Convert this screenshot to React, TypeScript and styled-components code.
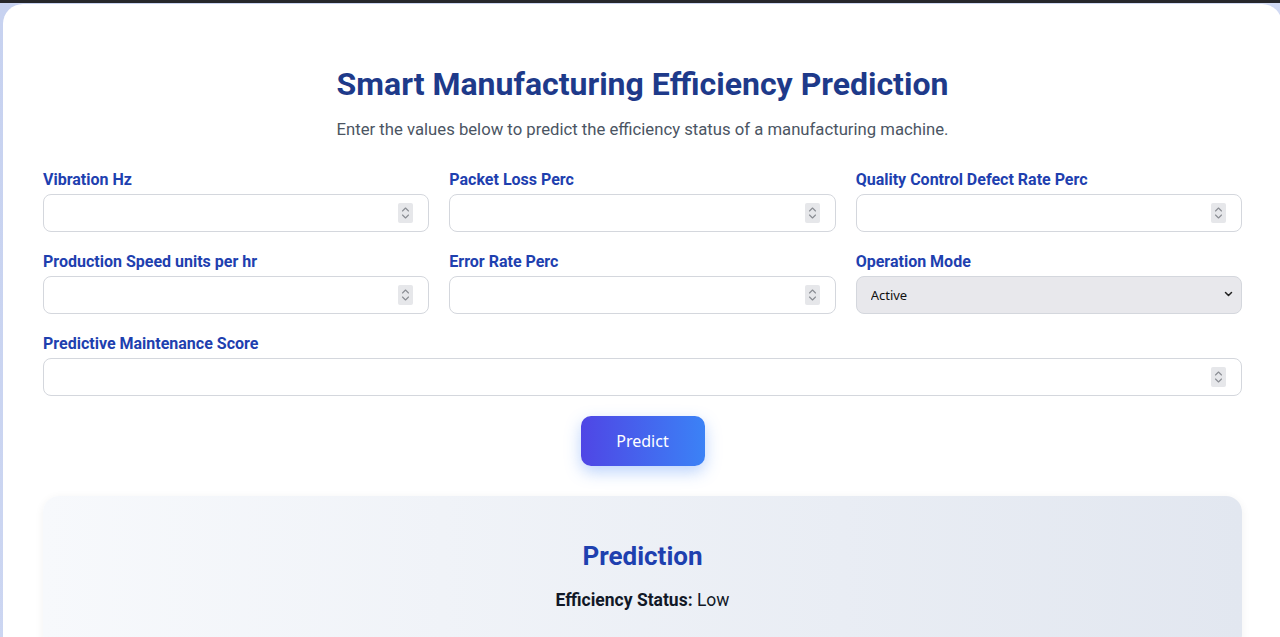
import React from "react";
import styled, { createGlobalStyle } from "styled-components";

const Global = createGlobalStyle`
  html, body { margin: 0; padding: 0; }
  body {
    background: linear-gradient(135deg, #c7d2f0 0%, #d6def5 100%);
    border-top: 3px solid #26272b;
    font-family: Roboto, "Noto Sans", Arial, sans-serif;
    min-height: 634px;
    overflow: hidden;
  }
  * { box-sizing: border-box; }
`;

const Card = styled.main`
  margin: 1px -2px 0 3px;
  background: #ffffff;
  border-radius: 20px 20px 0 0;
  padding: 61px 40px 40px;
  min-height: 640px;
`;

const Title = styled.h1`
  margin: 0;
  text-align: center;
  color: #1e3a8a;
  font-size: 32px;
  font-weight: 700;
  line-height: 38px;
`;

const Subtitle = styled.p`
  margin: 17px 0 0;
  text-align: center;
  color: #4b5563;
  font-size: 16.7px;
  line-height: 20px;
`;

const FormGrid = styled.div`
  margin-top: 31px;
  display: grid;
  grid-template-columns: repeat(3, 1fr);
  column-gap: 20px;
  row-gap: 21px;
`;

const Field = styled.label<{ $span?: number }>`
  display: flex;
  flex-direction: column;
  gap: 5px;
  grid-column: span ${(p) => p.$span ?? 1};
`;

const LabelText = styled.span`
  color: #1e40af;
  font-size: 16px;
  font-weight: 700;
  line-height: 18px;
`;

const InputWrap = styled.div`
  position: relative;
`;

const TextInput = styled.input`
  width: 100%;
  height: 38px;
  border: 1px solid #d4d7dd;
  border-radius: 8px;
  background: #fff;
  padding: 0 12px;
  font: inherit;
  font-size: 14px;
  outline: none;
`;

const Spinner = styled.span`
  position: absolute;
  right: 16px;
  top: 9px;
  width: 15px;
  height: 20px;
  background: #e6e7ea;
  border-radius: 2px;
  display: flex;
  align-items: center;
  justify-content: center;
`;

const Select = styled.select`
  width: 100%;
  height: 38px;
  border: 1px solid #d4d7dd;
  border-radius: 8px;
  background: #e8e8ec;
  padding: 0 14px;
  font-family: "Noto Sans", Roboto, sans-serif;
  font-size: 13px;
  color: #111;
  appearance: none;
  outline: none;
`;

const Chevron = styled.span`
  position: absolute;
  right: 9px;
  top: 14px;
  pointer-events: none;
  display: flex;
`;

const ButtonRow = styled.div`
  display: flex;
  justify-content: center;
  margin-top: 20px;
`;

const PredictButton = styled.button`
  width: 124px;
  height: 50px;
  border: none;
  border-radius: 10px;
  background: linear-gradient(90deg, #4f46e5 0%, #3b82f6 100%);
  color: #fff;
  font-family: "Noto Sans", "Open Sans", sans-serif;
  font-size: 16px;
  box-shadow: 0 6px 16px rgba(59, 130, 246, 0.35);
  cursor: pointer;
`;

const ResultBox = styled.section`
  margin-top: 30px;
  border-radius: 16px;
  background: linear-gradient(90deg, #f7f9fc 0%, #e2e7f0 100%);
  box-shadow: 0 2px 10px rgba(15, 23, 42, 0.06);
  padding: 44px 20px 40px;
  text-align: center;
`;

const ResultTitle = styled.h2`
  margin: 0;
  color: #1e40af;
  font-size: 26px;
  font-weight: 700;
  line-height: 32px;
`;

const ResultText = styled.p`
  margin: 17px 0 0;
  color: #111827;
  font-size: 17.5px;
  line-height: 22px;
  strong { font-weight: 700; }
`;

const SpinIcon = () => (
  <svg width="9" height="14" viewBox="0 0 9 14" fill="none" stroke="#8a8d93" strokeWidth="1.1" strokeLinecap="round" strokeLinejoin="round">
    <path d="M1.5 5 L4.5 2 L7.5 5" />
    <path d="M1.5 9 L4.5 12 L7.5 9" />
  </svg>
);

const NumberField = ({ label, span }: { label: string; span?: number }) => (
  <Field $span={span}>
    <LabelText>{label}</LabelText>
    <InputWrap>
      <TextInput type="text" inputMode="decimal" />
      <Spinner>
        <SpinIcon />
      </Spinner>
    </InputWrap>
  </Field>
);

export default function App() {
  return (
    <>
      <Global />
      <Card>
        <Title>Smart Manufacturing Efficiency Prediction</Title>
        <Subtitle>Enter the values below to predict the efficiency status of a manufacturing machine.</Subtitle>
        <FormGrid>
          <NumberField label="Vibration Hz" />
          <NumberField label="Packet Loss Perc" />
          <NumberField label="Quality Control Defect Rate Perc" />
          <NumberField label="Production Speed units per hr" />
          <NumberField label="Error Rate Perc" />
          <Field>
            <LabelText>Operation Mode</LabelText>
            <InputWrap>
              <Select defaultValue="Active">
                <option>Active</option>
                <option>Idle</option>
                <option>Maintenance</option>
              </Select>
              <Chevron>
                <svg width="9" height="8" viewBox="0 0 9 8" fill="none" stroke="#222" strokeWidth="1.5" strokeLinecap="round" strokeLinejoin="round">
                  <path d="M1.5 2.5 L4.5 5.5 L7.5 2.5" />
                </svg>
              </Chevron>
            </InputWrap>
          </Field>
          <NumberField label="Predictive Maintenance Score" span={3} />
        </FormGrid>
        <ButtonRow>
          <PredictButton>Predict</PredictButton>
        </ButtonRow>
        <ResultBox>
          <ResultTitle>Prediction</ResultTitle>
          <ResultText>
            <strong>Efficiency Status:</strong> Low
          </ResultText>
        </ResultBox>
      </Card>
    </>
  );
}
